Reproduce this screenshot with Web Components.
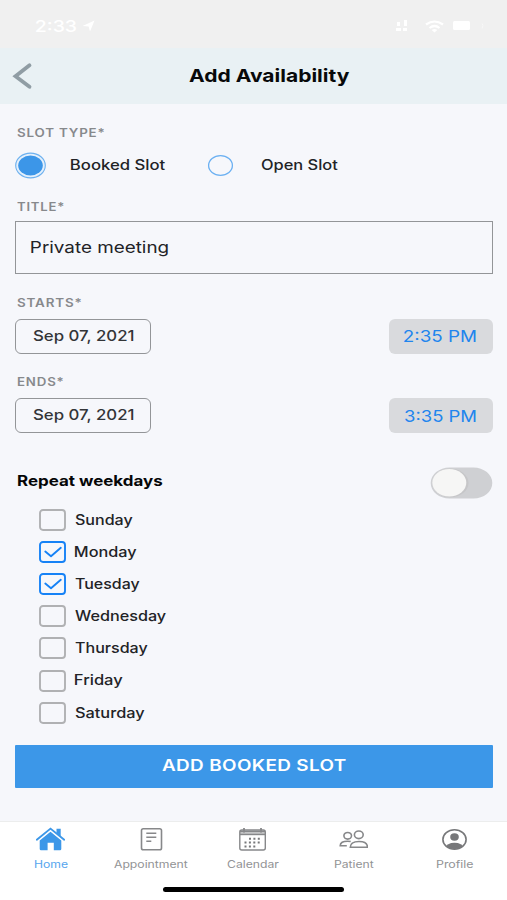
<!DOCTYPE html>
<html lang="en">
<head>
<meta charset="utf-8">
<title>Add Availability</title>
<style>
html,body{margin:0;height:100%;overflow:hidden}
body{font-family:Inter,"Liberation Sans",sans-serif;color:#222326}
</style>
</head>
<body>
<availability-screen></availability-screen>
<script>
const define = (name, html, setup) => customElements.define(name, class extends HTMLElement {
  connectedCallback() {
    if (this.shadowRoot) return;
    this.attachShadow({mode: "open"}).innerHTML = typeof html === "function" ? html(this) : html;
    if (setup) setup(this);
  }
});

/* Text stretched horizontally so that its ink spans exactly `w` pixels. */
const ctx = document.createElement("canvas").getContext("2d");
define("wide-text", el => `<style>
:host{display:block;flex:none;width:${el.getAttribute("w")}px;line-height:1;white-space:nowrap}
span{display:block;width:max-content;transform-origin:0 50%}
</style><span>${el.getAttribute("text")}</span>`, el => {
  const s = +el.getAttribute("size") || 14, wt = el.getAttribute("weight") || 400;
  const ls = el.getAttribute("spacing") || 0, span = el.shadowRoot.querySelector("span");
  span.style.cssText = `font-size:${s}px;font-weight:${wt};letter-spacing:${ls}px`;
  ctx.font = `${wt} ${s}px Inter, "Liberation Sans", sans-serif`;
  ctx.letterSpacing = ls + "px";
  const m = ctx.measureText(el.getAttribute("text"));
  const ink = m.actualBoundingBoxRight + m.actualBoundingBoxLeft;
  const k = el.getAttribute("w") / ink;
  span.style.transform = `translateX(${m.actualBoundingBoxLeft * k}px) scaleX(${k})`;
});

define("status-bar", `<style>
:host{display:flex;box-sizing:border-box;height:48px;padding:4px 22px 0 35.5px;background:#f0f0f0;color:#fff;align-items:center}
.plane{margin-left:5px}.sp{flex:1}svg{flex:none}
.sig{margin-right:17px}.wifi{margin-right:9px}
</style>
<wide-text text="2:33" w="41" size="16" weight="500"></wide-text>
<svg class="plane" width="13" height="12" viewBox="0 0 13 12"><path d="M0.5 6 12.5.5 8 11.5 6.6 6.5Z" fill="#fff"/></svg>
<div class="sp"></div>
<svg class="sig" width="12" height="12" viewBox="0 0 12 12" fill="#fff"><path d="M1 2h3v4H1zM8 0h3v6H8zM0 8h5v3H0zM7 8h4v3H7z"/></svg>
<svg class="wifi" width="19" height="13" viewBox="0 0 19 13" fill="none" stroke="#fff" stroke-width="2.2"><path d="M1 4.5Q9.500-1.500 18 4.500M4.500 8Q9.500 4 14.500 8"/><path d="M6.700 10Q9.500 8 12.300 10L9.500 12.500Z" fill="#fff" stroke="none"/></svg>
<svg width="32" height="12" viewBox="0 0 32 12"><rect x="0" y="1" width="17" height="9" rx="1.500" fill="#fff"/><path d="M29 3.500q2 2 0 5" fill="none" stroke="#f8f8f8"/></svg>`);

define("nav-header", `<style>
:host{display:grid;grid-template-columns:188.5px 1fr;height:56px;align-items:center;background:#e9f1f4;color:#08090a}
svg{display:block;margin-left:12px}
</style>
<svg width="22" height="28" viewBox="0 0 22 28"><path d="M17.500 3.300 3.500 14.300 17.500 24.800" fill="none" stroke="#909da4" stroke-width="3.800" stroke-linecap="round"/></svg>
<wide-text text="Add Availability" w="160.5" size="18" weight="700"></wide-text>`);

define("field-label", el => `<style>
:host{display:flex;height:16px;padding-left:1.5px;align-items:center;color:#87898c}
</style><wide-text text="${el.getAttribute("text")}" w="${el.getAttribute("w")}" size="11.5" weight="600" spacing="0.7"></wide-text>`);

define("radio-option", el => `<style>
:host{display:flex;align-items:center}
.d{display:grid;place-items:center;width:31px;height:32px;margin-right:25px}svg{display:block}
</style><div class="d"><svg width="31" height="27" viewBox="0 0 31 27">${el.hasAttribute("checked")
  ? '<ellipse cx="15.500" cy="13.500" rx="14.800" ry="12.400" fill="#e4f0fc" stroke="#6db1ef" stroke-width="1.100"/><ellipse cx="15.500" cy="13.500" rx="12.300" ry="10" fill="#3c96e8"/>'
  : '<ellipse cx="15.500" cy="13.500" rx="11.900" ry="9.800" fill="none" stroke="#6bb0f2" stroke-width="1.300"/>'}</svg></div>
<wide-text text="${el.getAttribute("text")}" w="${el.getAttribute("w")}" size="14.2" weight="500"></wide-text>`);

define("text-input", `<style>
:host{display:flex;box-sizing:border-box;height:53px;border:1px solid #939598;padding-left:15px;align-items:center;color:#222326}
</style><wide-text text="Private meeting" w="137" size="16.3" weight="400"></wide-text>`);

define("date-row", el => `<style>
:host{display:flex;justify-content:space-between;height:35px}
.date,.time{display:flex;box-sizing:border-box;align-items:center;justify-content:center;border-radius:6px}
.date{width:136px;border:1px solid #939598;color:#333538}
.time{width:104px;background:#d9dadd;color:#2185ee}
</style><div class="date"><wide-text text="Sep 07, 2021" w="100.500" size="14.500" weight="500"></wide-text></div>
<div class="time"><wide-text text="${el.getAttribute("time")}" w="72.500" size="16" weight="400"></wide-text></div>`);

define("toggle-row", `<style>
:host{display:flex;justify-content:space-between;height:32px;padding-left:1.500px;color:#050607}
wide-text{margin-top:6.500px}svg{display:block}
</style><wide-text text="Repeat weekdays" w="145.500" size="14.600" weight="700"></wide-text>
<svg width="63" height="32" viewBox="0 0 63 32"><path d="M19.500.5h24a18.800 15.500 0 0 1 0 31h-24a18.800 15.500 0 0 1 0-31Z" fill="#cfd0d3"/><ellipse cx="20.500" cy="16" rx="18" ry="14.300" fill="#bfc0c2" opacity=".6"/><ellipse cx="19.300" cy="15.800" rx="17" ry="13.700" fill="#f6f6f5"/></svg>`);

define("day-check", el => { const on = el.hasAttribute("checked"); return `<style>
:host{display:flex;height:32.1px;align-items:center;gap:9px}svg{display:block;flex:none}
</style><svg width="27" height="22" viewBox="0 0 27 22" fill="none"><rect x="1" y="1" width="25" height="20" rx="3" stroke="${on ? "#1682f6" : "#b0b1b3"}" stroke-width="1.900"/>${on
  ? '<path d="M6.300 10.600 12 15.200 21.800 6.800" stroke="#1682f6" stroke-width="1.900" stroke-linecap="round" stroke-linejoin="round"/>' : ""}</svg>
<wide-text text="${el.getAttribute("text")}" w="${el.getAttribute("w")}" size="14.200" weight="500"></wide-text>`; });

define("submit-button", `<style>
:host{display:flex;height:43px;align-items:center;justify-content:center;background:#3c97e8;color:#fff;border-radius:1px}
</style><wide-text text="ADD BOOKED SLOT" w="184" size="15.500" weight="600" spacing="0.3"></wide-text>`);

const icons = {
  home: `<path d="M.8 13.700 14.500 2.600 28.200 13.700" stroke="#3c97e8" stroke-width="1.900" fill="none" stroke-linecap="round"/><path d="M20.500 2.800h4.200v8l-4.200-3.400Z" fill="#3c97e8"/><path d="M14.500 5.800 25.300 14.500V23q0 1.300-1.300 1.300h-6.200v-7.500h-6.200v7.500H5q-1.300 0-1.300-1.300v-8.500Z" fill="#3c97e8"/>`,
  note: `<g fill="none" stroke="#87888a"><rect x="4.500" y="2.700" width="20" height="21" rx="1.800" stroke-width="1.600"/><path d="M9.300 7.200h10M9.300 11.200h10M9.300 15.300h5" stroke-width="1.600"/></g>`,
  calendar: `<g fill="none" stroke="#87888a" stroke-width="1.400"><rect x="1.800" y="4" width="25.500" height="20" rx="2"/><path d="M2 8.300h25" stroke-width="1.800"/><path d="M2 5.500h25" stroke-width="2"/><path d="M6 2v4.500M23 2v4.500" stroke-width="1.800"/></g><path d="M11 12.800h13M6.500 16.500h17.500M6.500 20.400h13" stroke="#77787a" stroke-width="2" stroke-dasharray="2 2.400"/>`,
  people: `<g fill="none" stroke="#87888a" stroke-width="1.600"><ellipse cx="8.700" cy="9.800" rx="3.800" ry="3.300"/><ellipse cx="19.800" cy="8.800" rx="4.400" ry="3.800"/><path d="M11.300 21.300C11.300 17 14.500 15.500 20 15.500s8.500 1.500 8.500 5.800ZM7.800 19.800H1.200C1.200 16.500 4 15.200 8.500 15.200q2 0 3.200.4"/></g>`,
  profile: `<defs><clipPath id="c"><ellipse cx="14.500" cy="13.500" rx="11.600" ry="9.700"/></clipPath></defs><ellipse cx="14.500" cy="13.500" rx="11.600" ry="9.700" fill="none" stroke="#77787a" stroke-width="1.600"/><ellipse cx="14.500" cy="11" rx="4.300" ry="3.700" fill="#77787a"/><ellipse cx="14.500" cy="21.800" rx="8.800" ry="5" fill="#77787a" clip-path="url(#c)"/>`
};
define("tab-item", el => `<style>
:host{display:flex;flex-direction:column;align-items:center;color:${el.hasAttribute("active") ? "#55a5ee" : "#929395"};padding-top:4px}
svg{display:block;margin-bottom:8px}
</style><svg width="29" height="25" viewBox="0 0 29 25">${icons[el.getAttribute("icon")]}</svg>
<wide-text text="${el.getAttribute("text")}" w="${el.getAttribute("w")}" size="10.300" weight="400"></wide-text>`);

define("tab-bar", `<style>
:host{display:block;box-sizing:border-box;height:79px;background:#fff;border-top:1px solid #eceded}
nav{display:grid;grid-template-columns:repeat(5,101.100px);height:64.500px}
.bar{width:181px;height:5.500px;border-radius:3px;background:#000;margin:0 auto}
</style><nav>
<tab-item active icon="home" text="Home" w="34"></tab-item>
<tab-item icon="note" text="Appointment" w="74.500"></tab-item>
<tab-item icon="calendar" text="Calendar" w="52"></tab-item>
<tab-item icon="people" text="Patient" w="40.500"></tab-item>
<tab-item icon="profile" text="Profile" w="37.500"></tab-item>
</nav><div class="bar"></div>`);

define("availability-screen", `<style>
:host{display:flex;flex-direction:column;width:507px;height:900px;background:#f6f7fb}
main{flex:1;padding:22px 14.500px 0 15px}
.radios{display:flex;height:32px;margin:7px 0 18.500px}
.radios radio-option:last-child{margin-left:39.500px}
text-input{margin:5.500px 0 21.500px}
date-row{margin:7px 0 21.500px}
toggle-row{margin-top:34px}
.days{padding:5px 0 0 24px}
submit-button{margin-top:16px}
</style>
<status-bar></status-bar><nav-header></nav-header>
<main>
<field-label text="SLOT TYPE*" w="87.500"></field-label>
<div class="radios"><radio-option checked text="Booked Slot" w="94.500"></radio-option><radio-option text="Open Slot" w="77"></radio-option></div>
<field-label text="TITLE*" w="47"></field-label>
<text-input></text-input>
<field-label text="STARTS*" w="64.500"></field-label>
<date-row time="2:35 PM"></date-row>
<field-label text="ENDS*" w="46.500"></field-label>
<date-row time="3:35 PM"></date-row>
<toggle-row></toggle-row>
<div class="days">
<day-check text="Sunday" w="57.500"></day-check>
<day-check checked text="Monday" w="61.500"></day-check>
<day-check checked text="Tuesday" w="64.500"></day-check>
<day-check text="Wednesday" w="91"></day-check>
<day-check text="Thursday" w="72.500"></day-check>
<day-check text="Friday" w="47.500"></day-check>
<day-check text="Saturday" w="69.500"></day-check>
</div>
<submit-button></submit-button>
</main>
<tab-bar></tab-bar>`);
</script>
</body>
</html>
